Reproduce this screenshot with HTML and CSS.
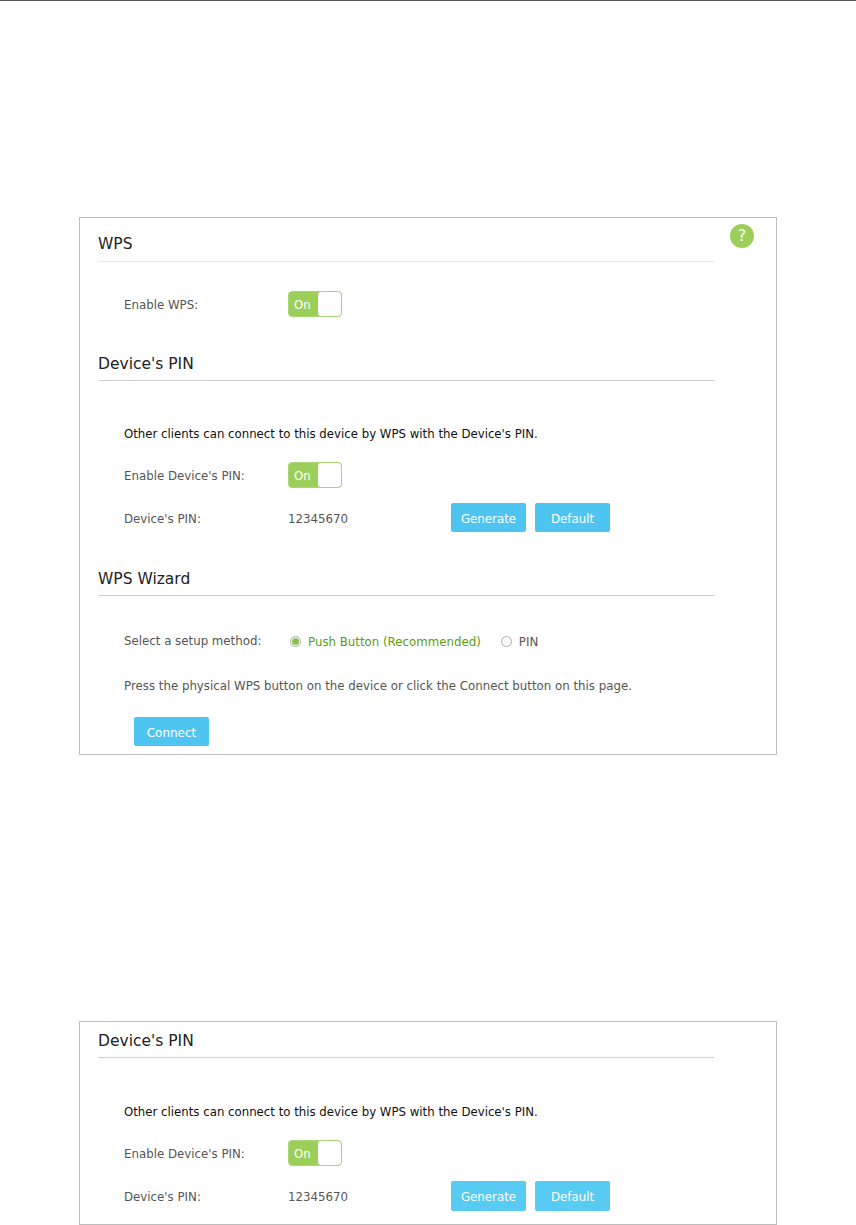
FILE: index.html
```html
<!DOCTYPE html>
<html lang="en">
<head>
<meta charset="utf-8">
<title>WPS</title>
<link rel="stylesheet" href="styles.css">
</head>
<body>
<div class="page">
  <section class="panel panel-main">
    <span class="help">?</span>
    <h2 class="head head-first head-light">WPS</h2>
    <div class="row row-wps">
      <span class="label">Enable WPS:</span>
      <span class="toggle"><span class="toggle-on">On</span><span class="knob"></span></span>
    </div>
    <h2 class="head">Device's PIN</h2>
    <p class="note note-desc">Other clients can connect to this device by WPS with the Device's PIN.</p>
    <div class="row row-enable">
      <span class="label">Enable Device's PIN:</span>
      <span class="toggle"><span class="toggle-on">On</span><span class="knob"></span></span>
    </div>
    <div class="row row-pin">
      <span class="label">Device's PIN:</span>
      <span class="value">12345670</span>
      <button class="btn">Generate</button>
      <button class="btn">Default</button>
    </div>
    <h2 class="head">WPS Wizard</h2>
    <div class="row row-method">
      <span class="label">Select a setup method:</span>
      <span class="radio radio-on"></span>
      <span class="choice choice-on">Push Button (Recommended)</span>
      <span class="radio"></span>
      <span class="choice">PIN</span>
    </div>
    <p class="note note-press">Press the physical WPS button on the device or click the Connect button on this page.</p>
    <button class="btn btn-connect">Connect</button>
  </section>

  <section class="panel panel-second">
    <h2 class="head head-top">Device's PIN</h2>
    <p class="note note-desc note-desc-second">Other clients can connect to this device by WPS with the Device's PIN.</p>
    <div class="row row-enable">
      <span class="label">Enable Device's PIN:</span>
      <span class="toggle"><span class="toggle-on">On</span><span class="knob"></span></span>
    </div>
    <div class="row row-pin">
      <span class="label">Device's PIN:</span>
      <span class="value">12345670</span>
      <button class="btn btn-light">Generate</button>
      <button class="btn btn-light">Default</button>
    </div>
  </section>
</div>
</body>
</html>
```

FILE: styles.css
```css
* { box-sizing: border-box; }
html, body { margin: 0; padding: 0; background: #fff; }
body { font-family: "DejaVu Sans", sans-serif; color: #555; overflow: hidden; height: 1225px; }

.page {
  border-top: 1px solid #555;
  padding: 216px 79px 0;
  height: 1225px;
}

.panel {
  position: relative;
  width: 698px;
  border: 1px solid #bcbcbc;
  padding: 0 0 0 18px;
}
.panel-main { height: 538px; }
.panel-second { margin-top: 266px; height: 204px; }

.head {
  width: 616px;
  margin: 37px 0 0;
  padding: 0 0 6px;
  border-bottom: 1px solid #cfcfcf;
  font-size: 15.5px;
  line-height: 20px;
  font-weight: 400;
  color: #222;
}
.head-first { margin-top: 16px; padding-bottom: 7px; }
.head-light { border-bottom-color: #e6e6e6; }
.head-top { margin-top: 9px; }

.row {
  display: flex;
  align-items: center;
  padding-left: 26px;
  font-size: 11.8px;
  line-height: 18px;
}
.row-wps { margin-top: 29px; height: 26px; }
.row-enable { margin-top: 18px; height: 26px; }
.row-pin { margin-top: 15px; height: 29px; }
.row-method { margin-top: 36px; height: 18px; }

.label { width: 164px; flex: none; padding-top: 2px; }
.value { width: 163px; flex: none; padding-top: 2px; }
.row-method .label { padding-top: 0; }

.toggle {
  display: flex;
  width: 54px;
  height: 26px;
  border: 1px solid #a9d576;
  border-radius: 4px;
  background: #9ccf5a;
  overflow: hidden;
}
.toggle-on {
  width: 29px;
  color: #fff;
  font-size: 11.8px;
  line-height: 26px;
  padding-left: 5px;
}
.knob { flex: 1; background: #fff; border-radius: 3px; }

.note {
  margin: 0;
  padding-left: 26px;
  font-size: 11.8px;
  line-height: 18px;
}
.note-desc { margin-top: 43px; color: #111; line-height: 20px; font-size: 11.75px; }
.note-desc-second { margin-top: 44px; }
.note-press { margin-top: 27px; }

.btn {
  display: block;
  width: 75px;
  height: 29px;
  margin: 0 9px 0 0;
  padding: 2px 0 0;
  border: 0;
  border-radius: 2px;
  background: #4ec5f1;
  color: #fff;
  font-family: inherit;
  font-size: 11.8px;
}
.btn-light { background: #58cbf2; height: 30px; }
.btn-connect { margin: 22px 0 0 36px; font-size: 12px; }

.radio {
  position: relative;
  flex: none;
  width: 11px;
  height: 11px;
  margin: 1px 7px 0 0;
  border: 1px solid #aaa;
  border-radius: 50%;
  background: #fff;
}
.radio-on { margin-left: 2px; }
.radio-on::after {
  content: "";
  position: absolute;
  left: 1px;
  top: 1px;
  width: 7px;
  height: 7px;
  border-radius: 50%;
  background: #8cc152;
}
.choice { font-size: 11.8px; margin-top: 1px; }
.choice-on { color: #5a9e0f; margin-right: 20px; }

.help {
  position: absolute;
  left: 650px;
  top: 6px;
  width: 24px;
  height: 24px;
  border-radius: 50%;
  background: #9ccf5a;
  color: #fff;
  font-size: 16px;
  font-weight: 400;
  line-height: 24px;
  text-align: center;
}
```
